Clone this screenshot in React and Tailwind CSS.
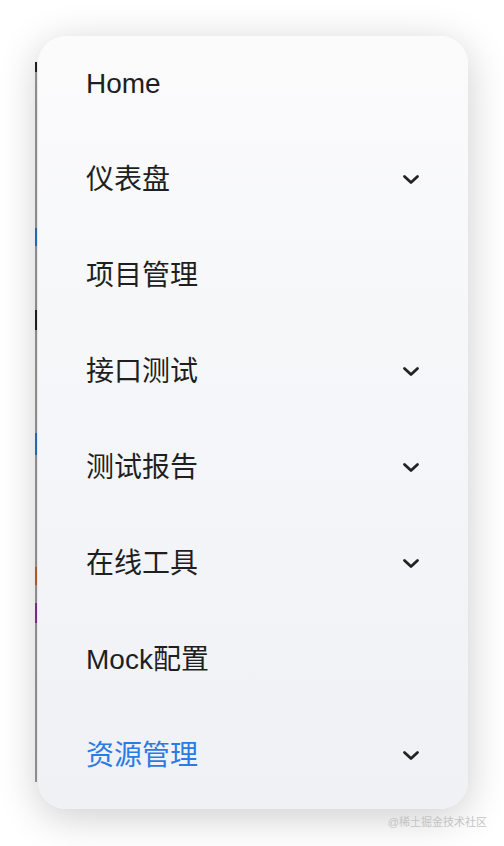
import React from "react";

const items = [
  { label: "Home", chevron: false },
  { label: "仪表盘", chevron: true },
  { label: "项目管理", chevron: false },
  { label: "接口测试", chevron: true },
  { label: "测试报告", chevron: true },
  { label: "在线工具", chevron: true },
  { label: "Mock配置", chevron: false },
  { label: "资源管理", chevron: true, active: true },
];

function Chevron() {
  return (
    <svg width="18" height="12" viewBox="0 0 18 12" fill="none">
      <path d="M2.5 2.5 L9 8.5 L15.5 2.5" stroke="#222" strokeWidth="2.8" strokeLinecap="round" strokeLinejoin="round" />
    </svg>
  );
}

export default function App() {
  return (
    <div
      className="relative w-[504px] h-[846px] overflow-hidden bg-white flex items-start pl-[35px] pt-[36px]"
      style={{ fontFamily: '"Liberation Sans", "Noto Sans CJK SC", sans-serif' }}
    >
      {/* edge of the page underneath, peeking out */}
      <div className="mt-[26px] w-[2px] h-[720px] bg-[#9a9a9a] flex flex-col">
        <div className="h-[10px] bg-[#222]" />
        <div className="mt-[156px] h-[18px] bg-[#2a73c0]" />
        <div className="mt-[64px] h-[20px] bg-[#222]" />
        <div className="mt-[103px] h-[22px] bg-[#2a73c0]" />
        <div className="mt-[112px] h-[18px] bg-[#c0602a]" />
        <div className="mt-[18px] h-[20px] bg-[#8a2a9a]" />
      </div>

      <div className="ml-[1px] w-[430px] h-[773px] rounded-[28px] bg-gradient-to-b from-[#fbfbfc] to-[#eff1f5] shadow-[0_8px_40px_rgba(0,0,0,0.2)] overflow-hidden flex flex-col">
        {items.map((it) => (
          <div key={it.label} className="flex items-center justify-between h-[96px] px-[48px]">
            <span
              className={
                "text-[28px] leading-none " +
                (it.active ? "text-[#2a7be4]" : "text-[#1f1f1f]")
              }
            >
              {it.label}
            </span>
            {it.chevron && <Chevron />}
          </div>
        ))}
      </div>

      <div className="absolute right-[17px] bottom-[18px] text-[11px] text-[#c4c4c4] leading-none">
        @稀土掘金技术社区
      </div>
    </div>
  );
}
